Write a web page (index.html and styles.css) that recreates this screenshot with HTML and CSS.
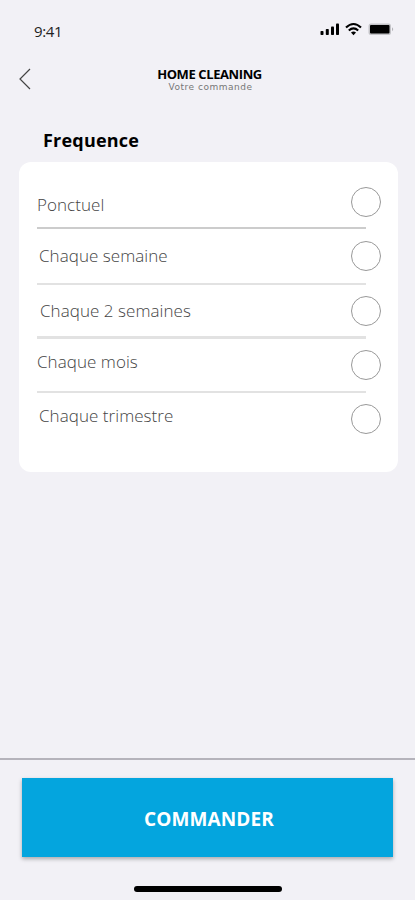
FILE: index.html
```html
<!DOCTYPE html>
<html lang="fr">
<head>
  <meta charset="UTF-8" />
  <title>Home Cleaning - Votre commande</title>
  <meta name="viewport" content="width=device-width, initial-scale=1.0" />
  <link rel="stylesheet" href="styles.css">
</head>
<body>

<div class="status-bar">
  <span class="time">9:41</span>
  <svg class="status-icons" width="76" height="16" viewBox="0 0 76 16">
    <!-- Signal -->
    <rect x="0.5" y="9" width="3" height="4" rx="0.8" />
    <rect x="5.8" y="7" width="3" height="6" rx="0.8" />
    <rect x="11" y="4.5" width="3" height="8.5" rx="0.8" />
    <rect x="16" y="1.5" width="3" height="11.5" rx="0.8" />
    <!-- Wifi -->
    <g fill="none" stroke="#000" stroke-width="2.1">
      <path d="M26 5.6 Q33.5 -1.6 41 5.6" />
      <path d="M28.8 8.5 Q33.5 4.2 38.2 8.5" />
    </g>
    <path d="M31 10.6 Q33.5 8.5 36 10.6 L33.5 13.2 Z" />
    <!-- Battery -->
    <rect x="48.5" y="1.5" width="22.5" height="11.5" rx="2.5" fill="#c4c4c8" />
    <rect x="50" y="3" width="19.5" height="8.5" rx="1" />
    <path d="M72 5.2 Q74.4 7.2 72 9.2 Z" fill="#b4b4b8" />
  </svg>
</div>

<header>
  <a href="#" class="back" aria-label="Retour">
    <svg width="12" height="22" viewBox="0 0 12 22">
      <path d="M11 1 L1 11 L11 21" fill="none" stroke="#444" stroke-width="1.2" />
    </svg>
  </a>
  <div class="titles">
    <h1>HOME CLEANING</h1>
    <p>Votre commande</p>
  </div>
</header>

<main>
  <h2>Frequence</h2>
  <div class="card">
    <label class="option once"><span>Ponctuel</span><input type="radio" name="frequence" /></label>
    <label class="option week"><span>Chaque semaine</span><input type="radio" name="frequence" /></label>
    <label class="option two-weeks"><span>Chaque 2 semaines</span><input type="radio" name="frequence" /></label>
    <label class="option month"><span>Chaque mois</span><input type="radio" name="frequence" /></label>
    <label class="option quarter"><span>Chaque trimestre</span><input type="radio" name="frequence" /></label>
  </div>
</main>

<footer>
  <button class="btn" type="button">COMMANDER</button>
  <div class="home-bar"></div>
</footer>

</body>
</html>
```
FILE: styles.css
```css
* { box-sizing: border-box; }

body {
  font-family: "Open Sans", "Noto Sans", sans-serif;
  margin: 0;
  height: 900px;
  display: flex;
  flex-direction: column;
  background: #f2f1f6;
  color: #000;
}

.status-bar {
  display: flex;
  justify-content: space-between;
  height: 60px;
  padding: 22px 19px 0 34px;
}

.time {
  font-size: 15px;
  line-height: 19px;
  letter-spacing: -0.4px;
  color: #222;
}

header {
  display: grid;
  grid-template-columns: 60px 1fr 60px;
  height: 68px;
}

.back {
  padding: 8px 0 0 19px;
}

.back svg { display: block; }

.titles {
  text-align: center;
  padding-top: 6px;
}

h1 {
  margin: 0 0 0 4px;
  font-size: 13px;
  line-height: 16px;
  font-weight: 700;
  letter-spacing: -0.4px;
}

.titles p {
  margin: 0 0 0 6px;
  font-family: "DejaVu Sans", sans-serif;
  font-size: 9px;
  line-height: 10px;
  letter-spacing: 0.5px;
  color: #777;
}

main { flex: 1; }

h2 {
  margin: -1px 0 9px 43px;
  font-size: 18px;
  line-height: 26px;
  font-weight: 700;
  letter-spacing: 0.2px;
}

.card {
  background: #fff;
  border-radius: 12px;
  width: 379px;
  height: 310px;
  margin-left: 19px;
  padding: 13px 32px 0 18px;
}

.option {
  display: flex;
  justify-content: space-between;
  align-items: flex-start;
  border-bottom: 2px solid #e2e2e2;
  font-size: 17px;
  line-height: 24px;
  font-weight: 300;
  letter-spacing: 0.05px;
  color: #444;
}

/* the radio sticks out past the end of the divider */
.option input {
  appearance: none;
  width: 30px;
  height: 30px;
  margin: 0 -15px 0 0;
  border: 1px solid #999;
  border-radius: 50%;
  background: #fff;
}

.option input:checked { background: #04a5de; }

.once { height: 54px; padding-top: 12px; border-color: #ccc; }
.once span { padding-top: 6px; }

.week { height: 56px; padding-top: 12px; }
.week span { padding: 3px 0 0 2px; }

.two-weeks { height: 54px; padding-top: 11px; border-bottom-width: 3px; }
.two-weeks span { padding: 3px 0 0 3px; }

.month { height: 54px; padding-top: 11px; }
.month span { padding-top: 0; }

.quarter { padding-top: 11px; border-bottom: none; }
.quarter span { padding: 0 0 0 2px; }

footer {
  height: 142px;
  border-top: 2px solid #b5b3bb;
  padding: 18px 22px 0;
}

.btn {
  display: block;
  width: 371px;
  height: 79px;
  border: none;
  background: #04a5de;
  color: #fff;
  font-family: inherit;
  font-size: 19px;
  font-weight: 700;
  letter-spacing: 0.1px;
  padding: 2px 0 0 3px;
  box-shadow: 0 2px 4px rgba(0, 0, 0, 0.3);
  cursor: pointer;
}

.home-bar {
  width: 148px;
  height: 6px;
  margin: 29px 0 0 112px;
  border-radius: 3px;
  background: #000;
}
```
